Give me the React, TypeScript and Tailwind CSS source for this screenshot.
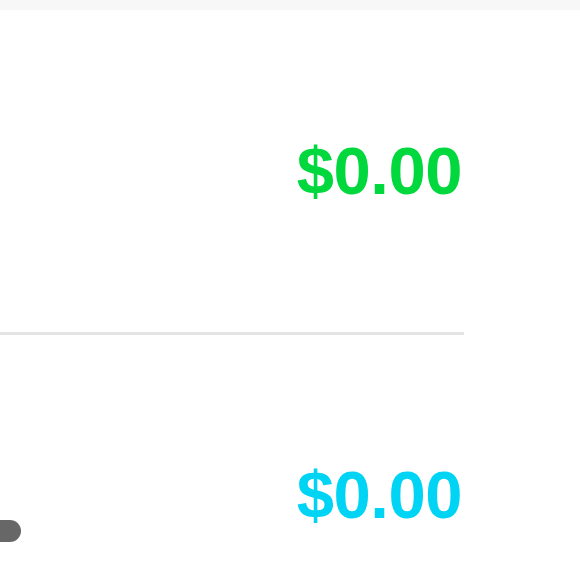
const Balance = ({ amount, color }: { amount: string; color: string }) => (
  <span
    className={`text-[67px] font-bold leading-none tracking-[-0.5px] ${color}`}
    style={{ fontFamily: '"Liberation Sans", Arial, sans-serif' }}
  >
    {amount}
  </span>
);

const App = () => {
  return (
    <div className="w-[580px] h-[580px] overflow-hidden bg-white">
      <div className="h-[10px] bg-[#f7f7f7]" />
      <div className="w-[464px]">
        <div className="h-[322px] flex items-center justify-end pr-[2px] pb-[2px]">
          <Balance amount="$0.00" color="text-[#00d83e]" />
        </div>
        <hr className="border-0 h-[3px] bg-[#e4e4e4]" />
        <div className="relative h-[300px]">
          <div className="h-[318px] flex items-center justify-end pr-[2px]">
            <Balance amount="$0.00" color="text-[#00d4f4]" />
          </div>
          <div className="absolute left-[-20px] top-[185px] w-[41px] h-[22px] rounded-full bg-[#676767]" />
        </div>
      </div>
    </div>
  );
};

export default App;
